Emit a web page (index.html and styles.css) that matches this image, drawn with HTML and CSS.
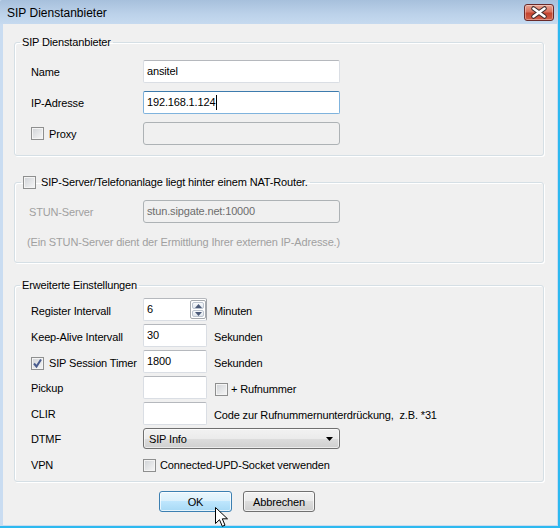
FILE: index.html
```html
<!DOCTYPE html>
<html lang="de">
<head>
<meta charset="utf-8">
<title>SIP Dienstanbieter</title>
<link rel="stylesheet" href="styles.css">
</head>
<body>
<div class="window">
  <div class="titlebar">
    <span class="title">SIP Dienstanbieter</span>
    <span class="close">
      <svg width="28" height="15" viewBox="0 0 28 15">
        <path d="M8.5 3.5 L19.5 11.5 M19.5 3.5 L8.5 11.5" stroke="#3a2a2a" stroke-width="4.6" stroke-linecap="round"/>
        <path d="M8.5 3.5 L19.5 11.5 M19.5 3.5 L8.5 11.5" stroke="#ffffff" stroke-width="2.6" stroke-linecap="round"/>
      </svg>
    </span>
  </div>
  <div class="client">
    <fieldset class="group g1">
      <legend class="legend">SIP Dienstanbieter</legend>
      <div class="form1">
        <span class="lbl">Name</span>
        <div class="tb">ansitel</div>
        <span class="lbl">IP-Adresse</span>
        <div class="tb focus">192.168.1.124<span class="caret"></span></div>
        <span class="lbl chk"><span class="cb"></span>Proxy</span>
        <div class="tb disabled"></div>
      </div>
    </fieldset>

    <fieldset class="group g2">
      <legend class="legend chk-legend"><span class="cb"></span>SIP-Server/Telefonanlage liegt hinter einem NAT-Router.</legend>
      <div class="form2">
        <span class="lbl dis">STUN-Server</span>
        <div class="tb disabled">stun.sipgate.net:10000</div>
      </div>
      <p class="note">(Ein STUN-Server dient der Ermittlung Ihrer externen IP-Adresse.)</p>
    </fieldset>

    <fieldset class="group g3">
      <legend class="legend">Erweiterte Einstellungen</legend>
      <div class="form3">
        <span class="lbl low">Register Intervall</span>
        <div class="tb spin"><span class="val">6</span>
          <span class="spinbtns">
            <span class="sbtn"><svg width="7" height="4" viewBox="0 0 7 4"><path d="M0 4 L3.5 0 L7 4Z" fill="#4b5a78"/></svg></span>
            <span class="sbtn"><svg width="7" height="4" viewBox="0 0 7 4"><path d="M0 0 L7 0 L3.5 4Z" fill="#4b5a78"/></svg></span>
          </span>
        </div>
        <span class="unit">Minuten</span>

        <span class="lbl low">Keep-Alive Intervall</span>
        <div class="tb">30</div>
        <span class="unit">Sekunden</span>

        <span class="lbl chk low"><span class="cb checked"><svg width="11" height="11" viewBox="0 0 11 11"><path d="M2 5.5 L4.5 8.5 L9 1.5" fill="none" stroke="#4a5c8e" stroke-width="2"/></svg></span>SIP Session Timer</span>
        <div class="tb">1800</div>
        <span class="unit">Sekunden</span>

        <span class="lbl">Pickup</span>
        <div class="tb"></div>
        <span class="unit chk"><span class="cb"></span>+ Rufnummer</span>

        <span class="lbl">CLIR</span>
        <div class="tb"></div>
        <span class="unit">Code zur Rufnummernunterdrückung,&nbsp; z.B. *31</span>

        <span class="lbl">DTMF</span>
        <div class="select">SIP Info<svg class="arrow" width="7" height="4" viewBox="0 0 7 4"><path d="M0 0 L7 0 L3.5 4Z" fill="#000"/></svg></div>

        <span class="lbl">VPN</span>
        <span class="wide chk"><span class="cb"></span>Connected-UPD-Socket verwenden</span>
      </div>
    </fieldset>

    <div class="buttons">
      <span class="btn default">OK</span>
      <span class="btn">Abbrechen</span>
    </div>
  </div>
  <svg class="cursor" width="14" height="21" viewBox="0 0 14 21">
    <path d="M0.5 0.5 L0.5 16.5 L4.5 12.7 L7.3 19.3 L10 18.2 L7.3 11.8 L12.5 11.8 Z" fill="#fff" stroke="#000" stroke-width="1"/>
  </svg>
</div>
</body>
</html>
```

FILE: styles.css
```css
html, body {
  margin: 0;
  padding: 0;
  background: #ffffff;
}
body {
  width: 560px;
  height: 530px;
  overflow: hidden;
  font-family: "Liberation Sans", Arial, sans-serif;
  font-size: 11px;
  letter-spacing: -0.15px;
  color: #000;
}
.window {
  position: relative;
  width: 560px;
  height: 528px;
  box-sizing: border-box;
  border-right: 2px solid #2db9ef;
  border-bottom: 2px solid #2db9ef;
  background: #c9dcf1;
  display: flex;
  flex-direction: column;
}
.titlebar {
  height: 24px;
  flex: none;
  display: flex;
  align-items: flex-start;
  justify-content: space-between;
  background: linear-gradient(#a7c0dc, #bcd2ea 60%, #c6daef);
  border-top-left-radius: 2px;
}
.title {
  font-size: 12px;
  letter-spacing: 0;
  margin: 6px 0 0 7px;
  line-height: 14px;
}
.close {
  margin: 4px 4px 0 0;
  width: 30px;
  height: 17px;
  box-sizing: border-box;
  border: 1px solid #6a2a2a;
  border-radius: 3px;
  background: linear-gradient(#e8a493, #d9725f 45%, #c4442f 55%, #d0604a);
  box-shadow: inset 0 0 0 1px rgba(255,255,255,0.35);
  display: flex;
  align-items: center;
  justify-content: center;
}
.client {
  flex: 1;
  margin: 0 1px 1px 3px;
  background: #f0f0f0;
  display: flex;
  flex-direction: column;
}
.group {
  width: 530px;
  box-sizing: border-box;
  margin: 0 0 0 11px;
  padding: 0;
  min-width: 0;
  border: 1px solid #d5dfe5;
  border-radius: 3px;
  box-shadow: inset 1px 1px 0 #fff, 1px 1px 0 #fff;
}
.legend {
  margin-left: 5px;
  padding: 0 2px;
  line-height: 14px;
  height: 14px;
}
.chk-legend {
  margin-left: 6px;
  display: flex;
  align-items: center;
  gap: 5px;
}
.g1 {
  margin-top: 11px;
  padding: 11px 0 10px 0;
}
.g2 {
  margin-top: 19px;
  padding: 11px 0 13px 0;
}
.g3 {
  margin-top: 15px;
  padding: 6px 0 3px 0;
}
.form1 {
  margin-left: 16px;
  display: grid;
  grid-template-columns: 112px 197px;
  grid-auto-rows: 23px;
  row-gap: 8px;
  align-items: center;
}
.form2 {
  margin-left: 14px;
  display: grid;
  grid-template-columns: 114px 197px;
  grid-auto-rows: 23px;
  align-items: center;
}
.form3 {
  margin-left: 16px;
  display: grid;
  grid-template-columns: 112px 64px auto;
  grid-template-rows: 23px 23px 23px 23px 23px 21px 26px;
  row-gap: 3px;
  align-items: center;
}
.lbl {
  line-height: 14px;
}
.lbl.low {
  padding-top: 3px;
}
.lbl.dis, .note {
  color: #a0a0a0;
}
.note {
  margin: 12px 0 0 12px;
  line-height: 14px;
}
.chk {
  display: flex;
  align-items: center;
  gap: 5px;
}
.tb {
  height: 23px;
  box-sizing: border-box;
  border: 1px solid #dadee4;
  border-top-color: #b5b8bd;
  border-radius: 2px;
  background: #fff;
  padding: 3px 4px 0 3px;
  line-height: 14px;
  display: flex;
  align-items: flex-start;
}
.tb.focus {
  border-color: #7fb3dd;
  border-top-color: #3d7bad;
}
.tb.disabled {
  background: #f0f0f0;
  border-color: #adb2b5;
  color: #6d6d6d;
  border-radius: 3px;
}
.caret {
  display: inline-block;
  width: 1px;
  height: 15px;
  background: #000;
  margin-left: 1px;
}
.spin {
  padding-right: 0;
  border-right-color: #a0a4aa;
  justify-content: space-between;
}
.spinbtns {
  width: 16px;
  margin: -2px 0 0 0;
  display: flex;
  flex-direction: column;
  gap: 1px;
  border: 1px solid #a5a9ae;
  border-radius: 2px;
  height: 19px;
  box-sizing: border-box;
  padding: 1px;
}
.sbtn {
  flex: 1;
  border: 1px solid #bcc4cf;
  border-radius: 2px;
  background: linear-gradient(#f8fafc, #dfe5ec);
  display: flex;
  align-items: center;
  justify-content: center;
}
.unit {
  margin-left: 7px;
  line-height: 14px;
  padding-top: 3px;
}
.unit.chk {
  margin-left: 8px;
  gap: 3px;
}
.cb {
  width: 13px;
  height: 13px;
  flex: none;
  box-sizing: border-box;
  border: 1px solid #8e8f8f;
  background: linear-gradient(135deg, #cfd2d6, #f7f7f7);
  box-shadow: inset 0 0 0 1px #f4f4f4;
  display: inline-flex;
  align-items: center;
  justify-content: center;
}
.cb.checked svg {
  display: block;
}
.select {
  grid-column: 2 / 4;
  width: 197px;
  height: 21px;
  box-sizing: border-box;
  border: 1px solid #707070;
  border-radius: 3px;
  background: linear-gradient(#f2f2f2, #ebebeb 50%, #dddddd 50%, #cfcfcf);
  box-shadow: inset 0 0 0 1px rgba(255,255,255,0.6);
  line-height: 14px;
  padding: 0 6px 0 5px;
  display: flex;
  align-items: center;
  justify-content: space-between;
}
.wide {
  grid-column: 2 / 4;
  gap: 4px;
}
.buttons {
  margin: 9px 0 0 156px;
  display: flex;
  gap: 11px;
}
.btn {
  width: 73px;
  height: 21px;
  box-sizing: border-box;
  border: 1px solid #707070;
  border-radius: 3px;
  background: linear-gradient(#f2f2f2, #ebebeb 50%, #dddddd 50%, #cfcfcf);
  box-shadow: inset 0 0 0 1px rgba(255,255,255,0.7);
  display: flex;
  align-items: center;
  justify-content: center;
}
.btn + .btn {
  width: 72px;
}
.btn.default {
  border-color: #3c7fb1;
  background: linear-gradient(#eaf6fd, #d9f0fc 50%, #bee6fd 50%, #a7d9f5);
}
.cursor {
  position: absolute;
  left: 215px;
  top: 507px;
}
```
